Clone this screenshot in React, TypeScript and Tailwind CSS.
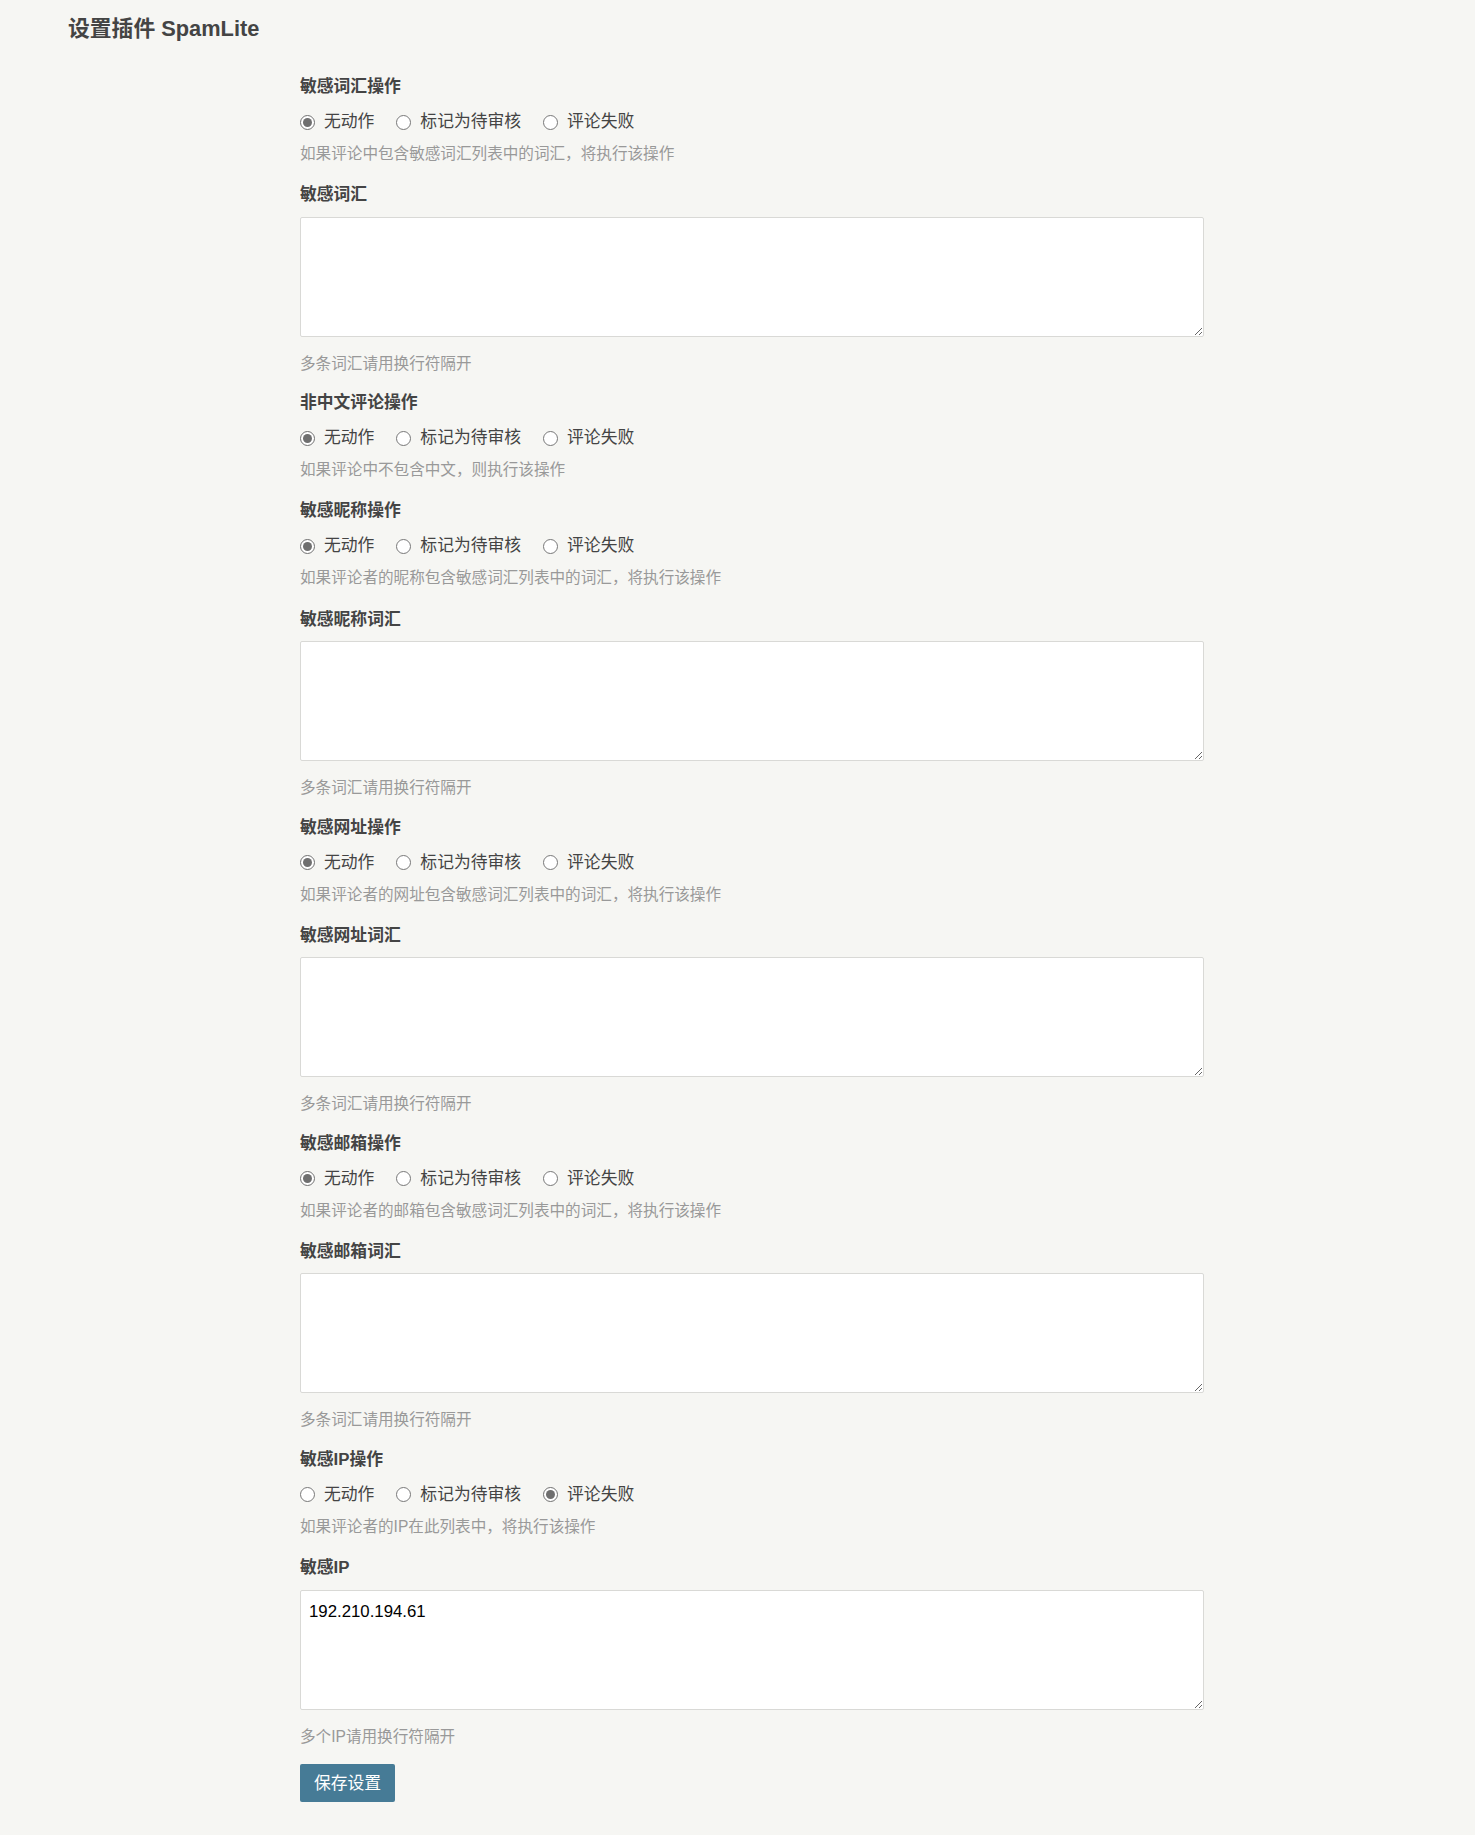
import React, { useState } from 'react';

type Field =
  | { kind: 'radio'; name: string; label: string; desc: string; value: string }
  | { kind: 'text'; name: string; label: string; desc: string; value: string };

const actions = [
  { value: 'none', text: '无动作' },
  { value: 'wait', text: '标记为待审核' },
  { value: 'abandon', text: '评论失败' },
];

const fields: Field[] = [
  { kind: 'radio', name: 'opt_ban', label: '敏感词汇操作', desc: '如果评论中包含敏感词汇列表中的词汇，将执行该操作', value: 'none' },
  { kind: 'text', name: 'words_ban', label: '敏感词汇', desc: '多条词汇请用换行符隔开', value: '' },
  { kind: 'radio', name: 'opt_nocn', label: '非中文评论操作', desc: '如果评论中不包含中文，则执行该操作', value: 'none' },
  { kind: 'radio', name: 'opt_name', label: '敏感昵称操作', desc: '如果评论者的昵称包含敏感词汇列表中的词汇，将执行该操作', value: 'none' },
  { kind: 'text', name: 'words_name', label: '敏感昵称词汇', desc: '多条词汇请用换行符隔开', value: '' },
  { kind: 'radio', name: 'opt_url', label: '敏感网址操作', desc: '如果评论者的网址包含敏感词汇列表中的词汇，将执行该操作', value: 'none' },
  { kind: 'text', name: 'words_url', label: '敏感网址词汇', desc: '多条词汇请用换行符隔开', value: '' },
  { kind: 'radio', name: 'opt_mail', label: '敏感邮箱操作', desc: '如果评论者的邮箱包含敏感词汇列表中的词汇，将执行该操作', value: 'none' },
  { kind: 'text', name: 'words_mail', label: '敏感邮箱词汇', desc: '多条词汇请用换行符隔开', value: '' },
  { kind: 'radio', name: 'opt_ip', label: '敏感IP操作', desc: '如果评论者的IP在此列表中，将执行该操作', value: 'abandon' },
  { kind: 'text', name: 'words_ip', label: '敏感IP', desc: '多个IP请用换行符隔开', value: '192.210.194.61' },
];

function RadioOption({ field }: { field: Field }) {
  const [selected, setSelected] = useState(field.value);

  return (
    <div className="pb-[18.2px]">
      <label className="block h-[24px] leading-[24px] font-bold text-[16.8px]">{field.label}</label>
      <div className="mt-[11px] flex h-[24px] items-center">
        {actions.map((a) => (
          <label key={a.value} className="mr-[22px] flex items-center">
            <input
              type="radio"
              name={field.name}
              checked={selected === a.value}
              onChange={() => setSelected(a.value)}
              className="m-0 h-[15px] w-[15px] accent-[#6f6f6f]"
            />
            <span className="ml-[9px] text-[16.8px] leading-[24px]">{a.text}</span>
          </label>
        ))}
      </div>
      <p className="mt-[9px] text-[15.6px] leading-[22px] text-[#999]">{field.desc}</p>
    </div>
  );
}

function TextOption({ field }: { field: Field }) {
  const [text, setText] = useState(field.value);

  return (
    <div className="pb-[16.5px]">
      <label className="block h-[24px] leading-[24px] font-bold text-[16.8px]">{field.label}</label>
      <textarea
        value={text}
        onChange={(e) => setText(e.target.value)}
        className="mt-[9.5px] block h-[120px] w-full rounded-[2px] border border-[#d9d9d6] bg-white px-[8px] pt-[8px] text-[16.8px] leading-[25px] text-black outline-none"
        style={{ fontFamily: '"Liberation Sans", Arial, sans-serif' }}
      />
      <p className="mt-[16px] text-[15.6px] leading-[22px] text-[#999]">{field.desc}</p>
    </div>
  );
}

export default function App() {
  return (
    <div
      className="min-h-screen bg-[#f6f6f3] text-[#444]"
      style={{ fontFamily: '"Liberation Sans", "Noto Sans CJK SC", sans-serif' }}
    >
      <h2 className="pl-[68px] pt-[14px] text-[21.8px] font-bold leading-[30px]">设置插件 SpamLite</h2>

      <form className="ml-[300px] mt-[31px] w-[904px] pb-[32px]" onSubmit={(e) => e.preventDefault()}>
        {fields.map((f) =>
          f.kind === 'radio' ? <RadioOption key={f.name} field={f} /> : <TextOption key={f.name} field={f} />
        )}
        <button
          type="submit"
          className="h-[38px] w-[95px] rounded-[2px] bg-[#467b96] text-[16.8px] text-white hover:bg-[#3c6a81]"
        >
          保存设置
        </button>
      </form>
    </div>
  );
}
